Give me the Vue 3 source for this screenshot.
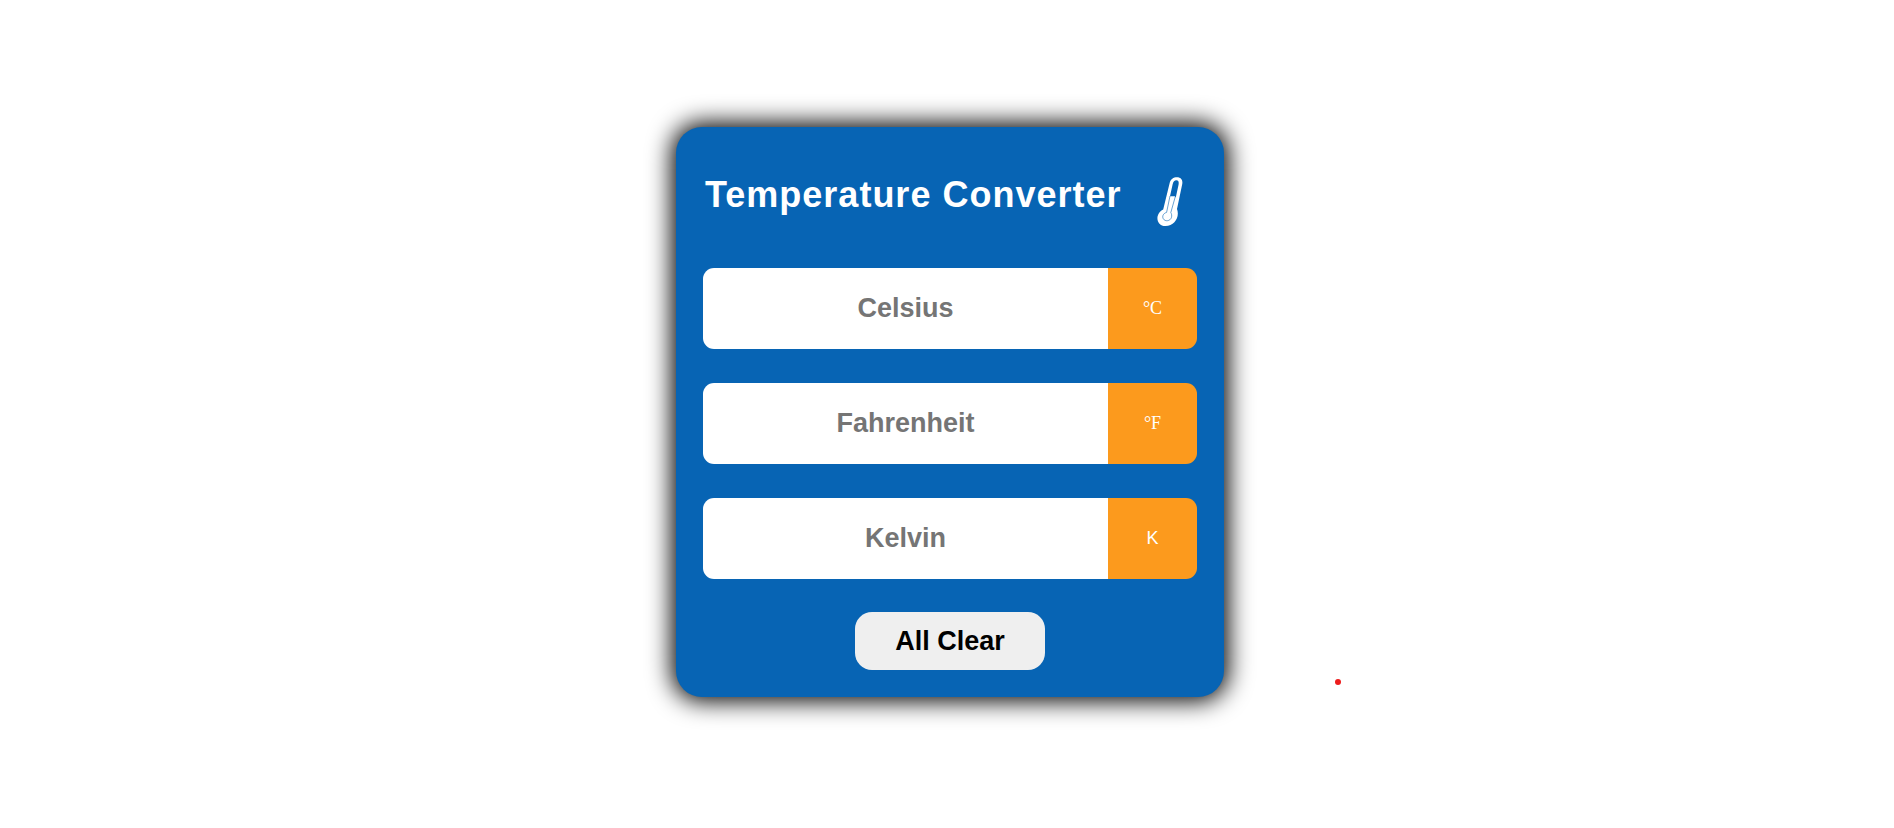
<script setup>
import { reactive } from 'vue'

const fields = [
  { id: 'celsius', name: 'Celsius', unit: '°C', serif: true },
  { id: 'fahrenheit', name: 'Fahrenheit', unit: '°F', serif: true },
  { id: 'kelvin', name: 'Kelvin', unit: 'K', serif: false },
]

const values = reactive({ celsius: '', fahrenheit: '', kelvin: '' })

const toCelsius = {
  celsius: (v) => v,
  fahrenheit: (v) => ((v - 32) * 5) / 9,
  kelvin: (v) => v - 273.15,
}

function clearAll() {
  values.celsius = ''
  values.fahrenheit = ''
  values.kelvin = ''
}

function convert(id, text) {
  const number = parseFloat(text)
  if (Number.isNaN(number)) {
    clearAll()
    values[id] = text
    return
  }
  const c = toCelsius[id](number)
  values.celsius = c.toFixed(2)
  values.fahrenheit = ((c * 9) / 5 + 32).toFixed(2)
  values.kelvin = (c + 273.15).toFixed(2)
  values[id] = text
}
</script>

<template>
  <main class="page">
    <section class="card">
      <header class="head">
        <h1 class="title">Temperature Converter</h1>
        <svg class="thermometer" viewBox="0 0 26 50" aria-hidden="true">
          <path
            d="M12.6 6.2 C13.6 2 16.4 0.2 20 0.2 C24.2 0.2 26 3.2 25.2 7.2 L20 32 C23 40 17.5 49 8.5 49 C2.5 49 -0.4 44.2 0.6 39.2 C1.4 35.8 3.8 33.6 6.2 32.4 Z"
            fill="#fff"
          />
          <path
            d="M15.6 7.4 C16.2 4.5 17.6 3.2 19.2 3.2 C21.4 3.2 22.1 4.8 21.6 7.4 L18.8 20.5 L17.8 19.2 H13 Z"
            fill="#0764b4"
          />
          <path
            d="M13 19 L9.6 35.4 C6 36.4 5 39.6 6.3 41.8 C8 44.8 13.2 44.2 14.4 40.6 C15 38.6 14.6 36.8 13.8 35.6 L18.3 19.6"
            fill="none"
            stroke="#0764b4"
            stroke-width="0.6"
          />
        </svg>
      </header>

      <form class="form" @submit.prevent="clearAll">
        <div class="fields">
          <div v-for="field in fields" :key="field.id" class="row">
            <input
              :id="field.id"
              class="value"
              type="text"
              inputmode="decimal"
              autocomplete="off"
              :placeholder="field.name"
              :aria-label="field.name"
              :value="values[field.id]"
              @input="convert(field.id, $event.target.value)"
            />
            <label :for="field.id" class="unit" :class="{ serif: field.serif }">{{ field.unit }}</label>
          </div>
        </div>
        <button class="clear" type="submit">All Clear</button>
      </form>
    </section>
    <span class="dot"></span>
  </main>
</template>

<style>
body {
  margin: 0;
  background: #fff;
}
</style>

<style scoped>
.page {
  position: relative;
  box-sizing: border-box;
  min-height: 100vh;
  padding: 0 0 4px 6px;
  display: flex;
  align-items: center;
  justify-content: center;
  font-family: "Liberation Sans", Arial, sans-serif;
}

.card {
  box-sizing: border-box;
  width: 100%;
  max-width: 548px;
  padding: 27px;
  border-radius: 26px;
  background: #0764b4;
  box-shadow: 0 0 24px 4px #000;
}

.head {
  display: flex;
  align-items: flex-start;
  justify-content: space-between;
  padding: 20px 14px 41px 2px;
}

.title {
  margin: 0;
  font-size: 36px;
  line-height: 42px;
  font-weight: 700;
  letter-spacing: 1px;
  color: #fff;
}

.thermometer {
  flex: none;
  width: 26px;
  height: 50px;
  margin-top: 3px;
}

.form {
  display: flex;
  flex-direction: column;
  gap: 33px;
}

.fields {
  display: flex;
  flex-direction: column;
  gap: 34px;
}

.row {
  display: flex;
  height: 81px;
  border-radius: 11px;
  overflow: hidden;
}

.value {
  flex: 1;
  min-width: 0;
  box-sizing: border-box;
  padding: 0;
  border: 0;
  outline: 0;
  background: #fff;
  color: #000;
  font: 700 27px "Liberation Sans", Arial, sans-serif;
  text-align: center;
}

.value::placeholder {
  color: #757575;
  opacity: 1;
}

.unit {
  display: flex;
  align-items: center;
  justify-content: center;
  width: 89px;
  background: #fc9a1d;
  color: #fff;
  font-size: 18px;
}

.serif {
  font-family: "Liberation Serif", "Times New Roman", serif;
}

.clear {
  align-self: center;
  width: 190px;
  height: 58px;
  padding: 0;
  border: 0;
  border-radius: 17px;
  background: #efefef;
  color: #000;
  font: 700 27px "Liberation Sans", Arial, sans-serif;
  cursor: pointer;
}

.dot {
  position: absolute;
  left: calc(50% + 388px);
  top: calc(50% + 265px);
  width: 6px;
  height: 6px;
  border-radius: 50%;
  background: #ed1c1c;
}
</style>
